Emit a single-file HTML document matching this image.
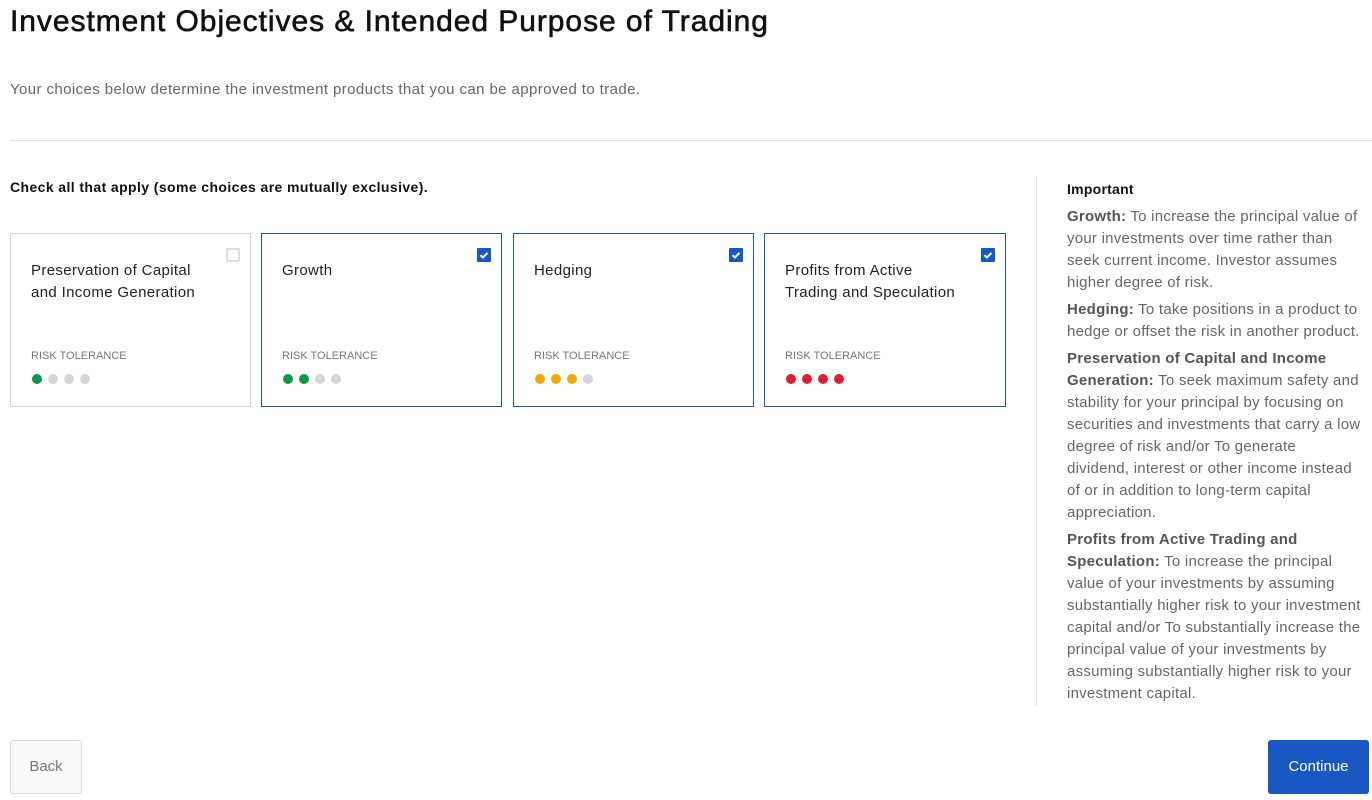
<!DOCTYPE html><html><head><style>
body{margin:0;width:1372px;height:800px;background:#fff;font-family:"Liberation Sans",sans-serif;position:relative;overflow:hidden;color:#111}
.a{position:absolute}
h1{position:absolute;left:10px;top:5px;margin:0;font-size:30px;font-weight:normal;letter-spacing:0.95px;color:#111;-webkit-text-stroke:0.6px #111}
.card{position:absolute;top:233px;width:241px;height:174px;border:1px solid #1957c2;box-sizing:border-box}
.card.off{border-color:#d4d4d4}
.t{position:absolute;left:20px;top:26px;font-size:15px;line-height:22px;color:#222;letter-spacing:0.35px}
.rt{position:absolute;left:20px;top:116px;font-size:11px;color:#777}
.dots{position:absolute;left:21px;top:140px;display:flex;gap:6px}
.dots i{width:10px;height:10px;border-radius:50%;background:#d6d6d6}
.cb{position:absolute;right:10px;top:14px;width:14px;height:14px;background:#1957c2;border-radius:1px}
.off .cb{background:#fff;border:2px solid #ddd;box-sizing:border-box}
.side{position:absolute;left:1067px;top:178px;width:299px;font-size:15px;line-height:22px;color:#666;letter-spacing:0.25px}
.side p{margin:0 0 5px}
.side b{color:#555}
</style></head><body>
<h1>Investment Objectives &amp; Intended Purpose of Trading</h1>
<div class="a" style="left:10px;top:81px;font-size:15px;color:#666;letter-spacing:0.4px">Your choices below determine the investment products that you can be approved to trade.</div>
<div class="a" style="left:10px;top:140px;width:1362px;height:1px;background:#e3e3e3"></div>
<div class="a" style="left:10px;top:179px;font-size:14px;font-weight:bold;color:#111;letter-spacing:0.4px">Check all that apply (some choices are mutually exclusive).</div>
<div class="card off" style="left:10px"><div class="cb"></div><div class="t">Preservation of Capital<br>and Income Generation</div><div class="rt">RISK TOLERANCE</div><div class="dots"><i style="background:#109447"></i><i></i><i></i><i></i></div></div>
<div class="card" style="left:261px"><div class="cb"><svg width="14" height="14"><path d="M3.5 7.2l2.4 2.4 4.6-4.8" stroke="#fff" stroke-width="2" fill="none"/></svg></div><div class="t">Growth</div><div class="rt">RISK TOLERANCE</div><div class="dots"><i style="background:#109447"></i><i style="background:#109447"></i><i></i><i></i></div></div>
<div class="card" style="left:513px"><div class="cb"><svg width="14" height="14"><path d="M3.5 7.2l2.4 2.4 4.6-4.8" stroke="#fff" stroke-width="2" fill="none"/></svg></div><div class="t">Hedging</div><div class="rt">RISK TOLERANCE</div><div class="dots"><i style="background:#f1a80b"></i><i style="background:#f1a80b"></i><i style="background:#f1a80b"></i><i></i></div></div>
<div class="card" style="left:764px;width:242px"><div class="cb"><svg width="14" height="14"><path d="M3.5 7.2l2.4 2.4 4.6-4.8" stroke="#fff" stroke-width="2" fill="none"/></svg></div><div class="t">Profits from Active<br>Trading and Speculation</div><div class="rt">RISK TOLERANCE</div><div class="dots"><i style="background:#e21d35"></i><i style="background:#e21d35"></i><i style="background:#e21d35"></i><i style="background:#e21d35"></i></div></div>
<div class="a" style="left:1036px;top:178px;width:1px;height:528px;background:#e0e0e0"></div>
<div class="side">
<p style="color:#111;font-weight:bold;font-size:14px;margin-bottom:6px">Important</p>
<p><b>Growth:</b> To increase the principal value of your investments over time rather than<br>seek current income. Investor assumes higher degree of risk.</p>
<p><b>Hedging:</b> To take positions in a product to hedge or offset the risk in another product.</p>
<p><b>Preservation of Capital and Income Generation:</b> To seek maximum safety and stability for your principal by focusing on securities and investments that carry a low degree of risk and/or To generate<br>dividend, interest or other income instead of or in addition to long-term capital appreciation.</p>
<p><b>Profits from Active Trading and Speculation:</b> To increase the principal value of your investments by assuming substantially higher risk to your investment capital and/or To substantially increase the principal value of your investments by assuming substantially higher risk to your investment capital.</p>
</div>
<div class="a" style="left:10px;top:740px;width:70px;height:52px;border:1px solid #d8d8d8;border-radius:3px;background:#fafafa;color:#777;font-size:15px;line-height:52px;text-align:center">Back</div>
<div class="a" style="left:1268px;top:740px;width:101px;height:54px;border-radius:3px;background:#1957c2;color:#fff;font-size:15px;line-height:54px;text-align:center">Continue</div>
</body></html>
